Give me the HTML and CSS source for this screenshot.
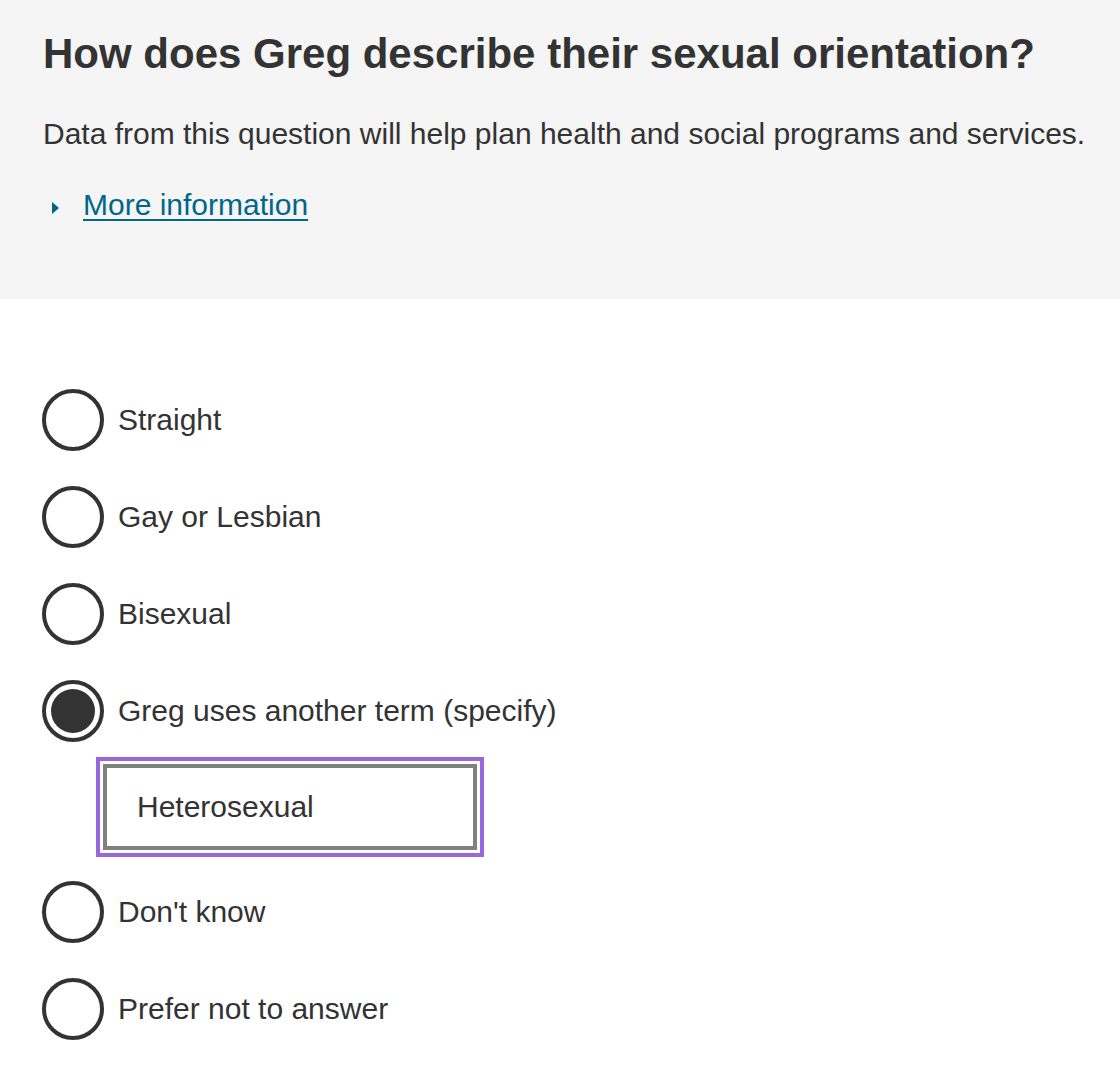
FILE: index.html
```html
<!DOCTYPE html>
<html lang="en">
<head>
<meta charset="utf-8">
<title>Sexual orientation</title>
<link rel="stylesheet" href="styles.css">
</head>
<body>
<header class="question">
  <h1 class="question-title">How does Greg describe their sexual orientation?</h1>
  <p class="question-desc">Data from this question will help plan health and social programs and services.</p>
  <div class="details">
    <span class="details-arrow"></span>
    <a class="details-link" href="#">More information</a>
  </div>
</header>
<main class="answers">
  <label class="option"><span class="radio"></span><span class="option-label">Straight</span></label>
  <label class="option"><span class="radio"></span><span class="option-label">Gay or Lesbian</span></label>
  <label class="option"><span class="radio"></span><span class="option-label">Bisexual</span></label>
  <label class="option"><span class="radio checked"></span><span class="option-label">Greg uses another term (specify)</span></label>
  <div class="specify"><div class="specify-input">Heterosexual</div></div>
  <label class="option"><span class="radio"></span><span class="option-label">Don't know</span></label>
  <label class="option"><span class="radio"></span><span class="option-label">Prefer not to answer</span></label>
</main>
</body>
</html>
```
FILE: styles.css
```css
html, body {
  margin: 0;
  padding: 0;
  background: #ffffff;
  font-family: "Liberation Sans", Arial, sans-serif;
  color: #333333;
}
.question {
  background: #f5f5f5;
  height: 299px;
  box-sizing: border-box;
  padding: 30px 0 0 43px;
}
.question-title {
  margin: 0;
  font-size: 42px;
  font-weight: bold;
  line-height: 48px;
}
.question-desc {
  margin: 36px 0 0 0;
  font-size: 30px;
  line-height: 40px;
}
.details {
  display: flex;
  align-items: center;
  margin-top: 31px;
  height: 40px;
}
.details-arrow {
  width: 0;
  height: 0;
  border-top: 6.5px solid transparent;
  border-bottom: 6.5px solid transparent;
  border-left: 7px solid #00678a;
  margin: 6px 0 0 9px;
}
.details-link {
  margin-left: 24px;
  font-size: 30px;
  line-height: 40px;
  color: #00678a;
  text-decoration: underline;
  text-underline-offset: 4px;
  text-decoration-thickness: 2px;
}
.answers {
  padding: 90px 0 0 42px;
  display: flex;
  flex-direction: column;
  gap: 35px;
}
.option {
  display: flex;
  align-items: center;
  gap: 14px;
  height: 62px;
}
.radio {
  width: 62px;
  height: 62px;
  box-sizing: border-box;
  border: 4px solid #333333;
  border-radius: 50%;
  background: #ffffff;
  display: flex;
  align-items: center;
  justify-content: center;
  flex: none;
}
.radio.checked::after {
  content: "";
  width: 44px;
  height: 44px;
  border-radius: 50%;
  background: #333333;
}
.option-label {
  font-size: 30px;
  line-height: 40px;
}
.specify {
  padding-left: 61px;
  margin-top: -13px;
  margin-bottom: -4px;
}
.specify-input {
  width: 374px;
  height: 86px;
  box-sizing: border-box;
  border: 4px solid #808080;
  outline: 4px solid #9966dd;
  outline-offset: 3px;
  padding-left: 30px;
  display: flex;
  align-items: center;
  font-size: 30px;
  background: #ffffff;
}
```
